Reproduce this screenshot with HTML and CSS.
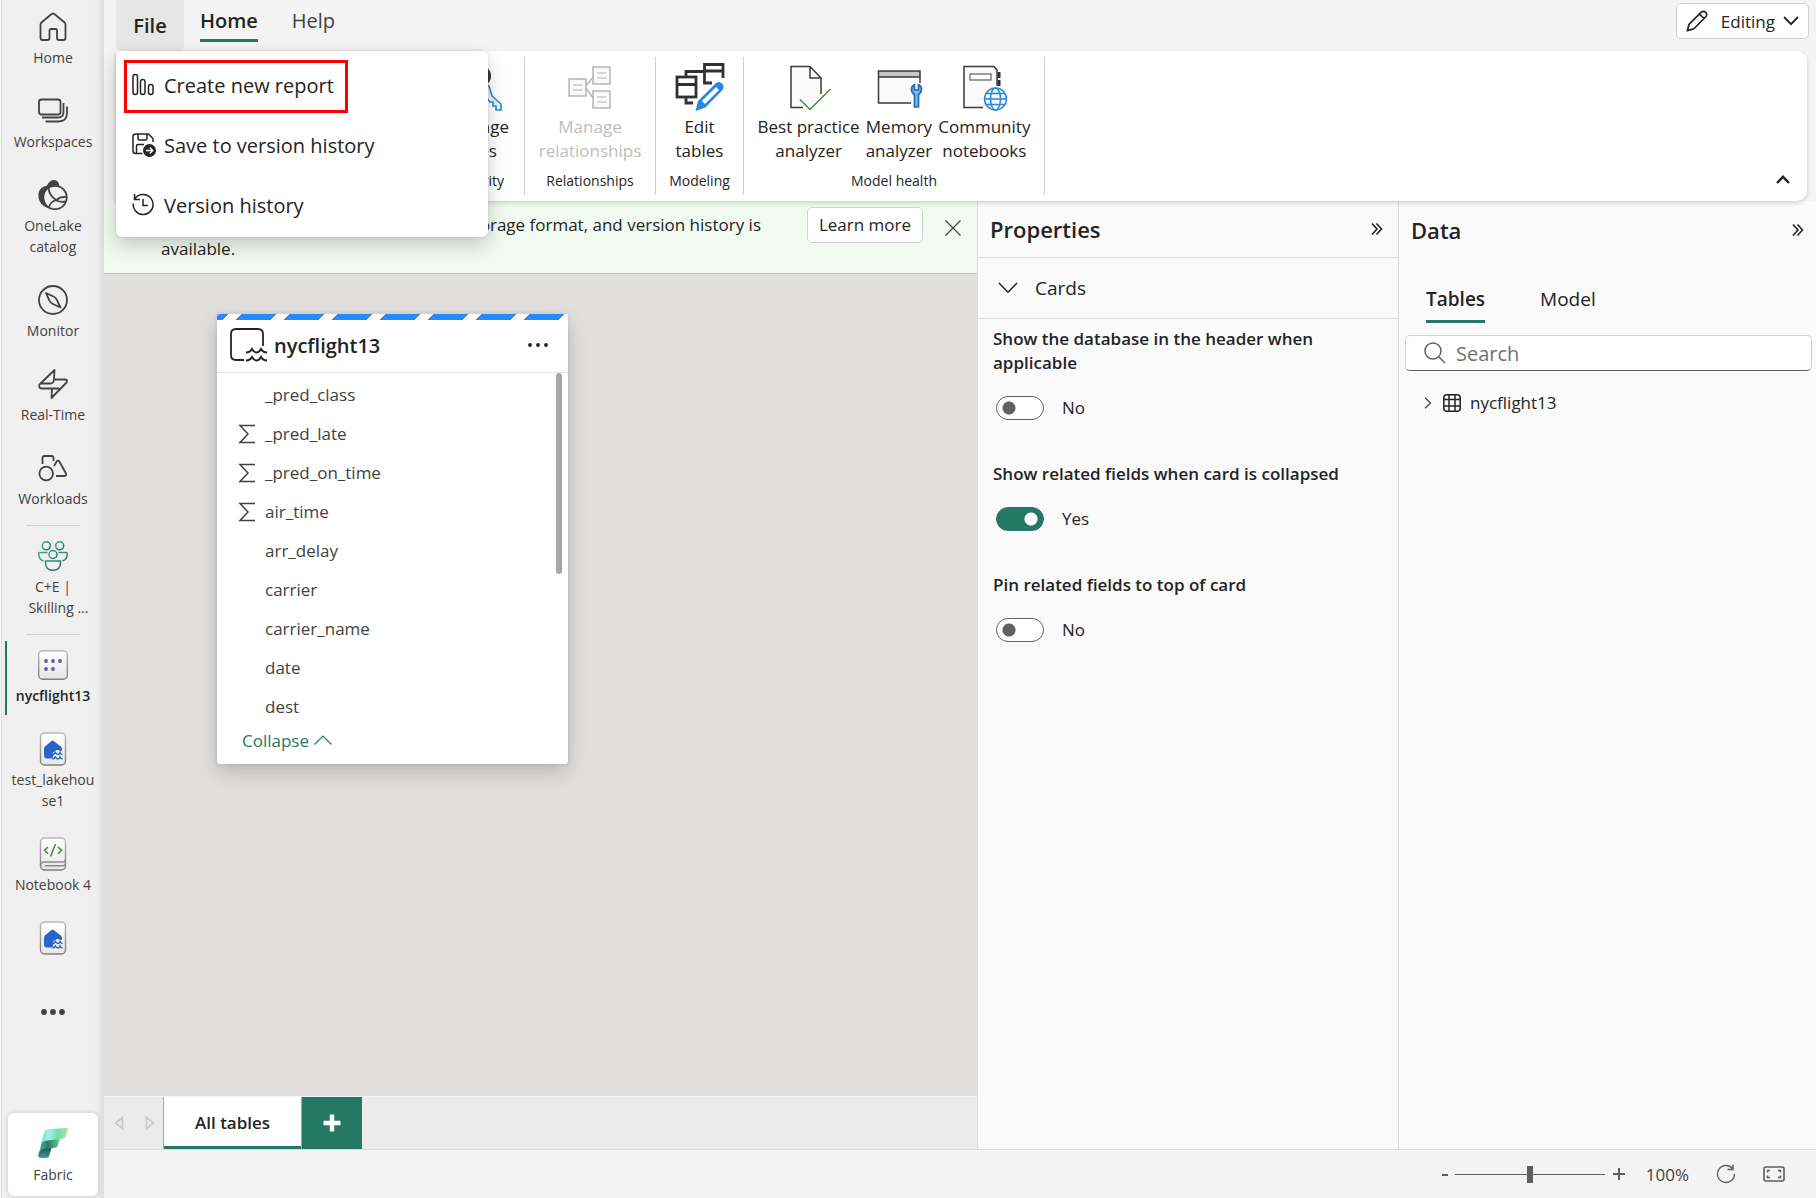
FILE: index.html
```html
<!DOCTYPE html>
<html lang="en">

<head>
  <meta charset="UTF-8">
  <meta name="viewport" content="width=device-width, initial-scale=1.0">
  <title>nycflight13 - Fabric</title>
  <link rel="stylesheet" href="styles.css">
</head>

<body>

  <!-- Shared icon shapes -->
  <svg class="defs" width="0" height="0" aria-hidden="true">
    <defs>
      <linearGradient id="paper" x1="0" y1="0" x2="0" y2="1">
        <stop offset="0" stop-color="#ffffff" />
        <stop offset="1" stop-color="#e6e6e6" />
      </linearGradient>
      <linearGradient id="paperEdge" x1="0" y1="0" x2="0" y2="1">
        <stop offset="0" stop-color="#b8b8b8" />
        <stop offset="1" stop-color="#7f7f7f" />
      </linearGradient>
      <linearGradient id="people" x1="0" y1="0" x2="1" y2="1">
        <stop offset="0" stop-color="#3fa58c" />
        <stop offset="1" stop-color="#21705f" />
      </linearGradient>
      <linearGradient id="fabricTop" x1="0" y1="0" x2="1" y2="0">
        <stop offset="0" stop-color="#6fe0d2" />
        <stop offset="0.3" stop-color="#a5f0e2" />
        <stop offset="0.6" stop-color="#6fdcb4" />
        <stop offset="1" stop-color="#a4e58c" />
      </linearGradient>
      <linearGradient id="fabricMid" x1="0" y1="0" x2="1" y2="0">
        <stop offset="0" stop-color="#4fae98" />
        <stop offset="0.4" stop-color="#2b7a6b" />
        <stop offset="1" stop-color="#6fca92" />
      </linearGradient>
      <linearGradient id="fabricLow" x1="0" y1="0" x2="0" y2="1">
        <stop offset="0" stop-color="#134b45" />
        <stop offset="1" stop-color="#3fa08f" />
      </linearGradient>
      <symbol id="lakehouse" viewBox="0 0 30 34">
        <rect x="2.5" y="1" width="25" height="32" rx="4" fill="url(#paper)" stroke="url(#paperEdge)" stroke-width="1.4" />
        <path d="M15 8.500L22.800 14.500Q24 15.500 24 17V18.500Q22.500 19.600 21 18.200Q18.500 17.600 17 19.200L14.500 21L15.500 23L14.500 26.500H9Q6 26.500 6 23.500V16.500Q6 15.200 7 14.400L13.500 9Q15 7.800 16.500 9Z" fill="#2a63cc" />
        <path d="M14.500 22.500Q16.200 22.500 17.500 20.500Q18.700 22.500 20 22.500Q21.300 22.500 22 20.500Q22.800 22.500 24.500 22.500M14.500 27Q16.200 27 17.500 25Q18.700 27 20 27Q21.300 27 22 25Q22.800 27 24.500 27" fill="none" stroke="#2a5db8" stroke-width="1.4" />
      </symbol>
      <symbol id="sigma" viewBox="0 0 18 20">
        <path d="M17 1.500H2L10 10L2 18.500H17" fill="none" stroke="#424242" stroke-width="1.500" />
      </symbol>
      <symbol id="expand" viewBox="0 0 12 14">
        <path d="M1 1.500L6 7L1 12.500M5.500 1.500L10.500 7L5.500 12.500" fill="none" stroke="#242424" stroke-width="1.600" />
      </symbol>
    </defs>
  </svg>

  <div class="app">

    <nav class="sidebar">
      <a class="nav-item" href="#">
        <svg width="30" height="30" viewBox="0 0 30 30" class="line-icon">
          <path d="M13.300 2.300Q15 .9 16.700 2.300L26.300 10.200Q27.500 11.200 27.500 12.800V26Q27.500 28 25.500 28H21Q19 28 19 26V18.500Q19 17 17.500 17H13Q11.500 17 11.500 18.500V26Q11.500 28 9.500 28H4.500Q2.500 28 2.500 26V12.800Q2.500 11.200 3.700 10.200Z" />
        </svg>
        <span>Home</span>
      </a>
      <a class="nav-item" href="#">
        <svg width="30" height="30" viewBox="0 0 30 30" class="line-icon">
          <rect x="1" y="3.500" width="21.500" height="15" rx="2.500" />
          <path d="M4 21.500H20Q25.500 21.500 25.500 16V7M7.500 25.500H20.500Q29 25.500 29 17V10.500" />
        </svg>
        <span>Workspaces</span>
      </a>
      <a class="nav-item" href="#">
        <svg width="30" height="30" viewBox="0 0 30 30">
          <path d="M9 5.500Q11.500 0 16 0Q20.500 0 21.500 6Q15 4.500 9.500 8Q5.500 12 6 18Q7 25 11 28.500Q4.500 26.500 1.800 21.500Q-.5 17 1 11.500Q2.500 7 9 5.500Z" fill="#424242" />
          <g fill="none" stroke="#424242" stroke-width="1.800">
            <circle cx="17" cy="17.500" r="11.700" />
            <path d="M10.500 8Q11 15.500 18.500 20.500Q22.500 22.500 27.500 21.500M11 27Q12.500 21.500 18.500 20Q22.500 16.500 28 17" />
          </g>
        </svg>
        <span>OneLake<br>catalog</span>
      </a>
      <a class="nav-item" href="#">
        <svg width="30" height="30" viewBox="0 0 30 30" class="line-icon">
          <circle cx="15" cy="15" r="14" />
          <path d="M8 8L15.500 11.500Q18 12.700 19 15.200L22.500 22.500L15 19Q12.500 17.800 11.300 15.300Z" />
        </svg>
        <span>Monitor</span>
      </a>
      <a class="nav-item" href="#">
        <svg width="30" height="30" viewBox="0 0 30 30" class="line-icon">
          <path d="M16.500 1L1.500 15.500Q.5 19 3.500 19.500H14L13.500 29L28.500 13.500Q30 10.500 27 10.500H16ZM16 10.500Q15.500 14.500 12.500 14.500H3M14 19.500H19.500Q21 19.500 22 20" />
        </svg>
        <span>Real-Time</span>
      </a>
      <a class="nav-item" href="#">
        <svg width="30" height="30" viewBox="0 0 30 30" class="line-icon">
          <circle cx="8.200" cy="20.500" r="6.800" />
          <path d="M4.500 11V5Q4.500 3 6.500 3H13.500Q15.500 3 15.500 5V8M16 13L18.500 8.700Q20 6.500 21.500 8.700L28 20.500Q28.800 23 26.500 23H18" />
        </svg>
        <span>Workloads</span>
      </a>
      <div class="nav-divider"></div>
      <a class="nav-item" href="#">
        <svg width="30" height="30" viewBox="0 0 30 30" fill="none" stroke="url(#people)" stroke-width="1.500">
          <circle cx="8.300" cy="4.800" r="4" />
          <circle cx="21.700" cy="4.800" r="4" />
          <circle cx="15" cy="13.500" r="4" />
          <path d="M7.500 20H22.500V22Q22.500 29.200 15 29.200Q7.500 29.200 7.500 22ZM9.500 11.500H1.500Q.8 11.500 .8 13Q.8 18.500 5.500 20M20.500 11.500H28.500Q29.200 11.500 29.200 13Q29.200 18.500 24.500 20" />
        </svg>
        <span>C+E |<br>&nbsp; &nbsp;Skilling ...</span>
      </a>
      <div class="nav-divider"></div>
      <a class="nav-item active" href="#">
        <svg width="30" height="30" viewBox="0 0 30 30">
          <rect x=".7" y=".7" width="28.600" height="28.600" rx="4" fill="url(#paper)" stroke="url(#paperEdge)" stroke-width="1.400" />
          <g fill="#6b4fb8">
            <circle cx="8" cy="11" r="1.900" />
            <circle cx="15" cy="11" r="1.900" />
            <circle cx="22" cy="11" r="1.900" />
            <circle cx="8" cy="19" r="1.900" />
            <circle cx="15" cy="19" r="1.900" />
          </g>
        </svg>
        <span>nycflight13</span>
      </a>
      <a class="nav-item" href="#">
        <svg class="tall" width="30" height="34"><use href="#lakehouse" /></svg>
        <span>test_lakehou<br>se1</span>
      </a>
      <a class="nav-item" href="#">
        <svg class="tall" width="30" height="34" viewBox="0 0 30 34">
          <rect x="2.500" y="1" width="25" height="32" rx="4" fill="url(#paper)" stroke="url(#paperEdge)" stroke-width="1.400" />
          <path d="M2.500 29Q2.500 25 6.500 25H24Q27.500 25 27.500 22M7 28.700H25.500Q27.500 28.500 27.500 26" fill="none" stroke="#8a8a8a" stroke-width="1.400" />
          <path d="M10 10L6.500 13.300L10 16.600M20 10L23.500 13.300L20 16.600M17.500 7L12.500 19.500" fill="none" stroke="#45963c" stroke-width="1.600" />
        </svg>
        <span>Notebook 4</span>
      </a>
      <a class="nav-item icon-only" href="#" aria-label="Lakehouse">
        <svg class="tall" width="30" height="34"><use href="#lakehouse" /></svg>
      </a>
      <button class="nav-more" aria-label="More">
        <svg width="24" height="6" viewBox="0 0 24 6" fill="#424242">
          <circle cx="3" cy="3" r="2.900" />
          <circle cx="12" cy="3" r="2.900" />
          <circle cx="21" cy="3" r="2.900" />
        </svg>
      </button>
      <a class="fabric" href="#">
        <svg width="30" height="30" viewBox="0 0 30 30">
          <path d="M1 24L3.500 20.500L14 18L11.500 27Q11 30 8 30H3Q0 30 .3 27Z" fill="url(#fabricLow)" />
          <path d="M4 13L22 10L20 17.500Q19.500 19.500 17 19.700L6 21Q2.500 21.500 1.300 24Z" fill="url(#fabricMid)" />
          <path d="M6 4.500Q7 1.500 10 1.200L30 0L27.500 8.500Q27 10.500 24.500 10.800L9 12.500Q4.500 13 3 16Z" fill="url(#fabricTop)" />
        </svg>
        <span>Fabric</span>
      </a>
    </nav>

    <div class="main">

      <header class="topbar">
        <button class="file-tab">File</button>
        <button class="top-tab selected">Home</button>
        <button class="top-tab">Help</button>
        <button class="mode">
          <svg width="22" height="22" viewBox="0 0 22 22" fill="none" stroke="#242424" stroke-width="1.700">
            <path d="M1.500 20.500L2.800 15Q3 14.300 3.500 13.800L15.500 2Q17.500 .5 19.700 2.300Q21.500 4.500 20 6.500L8.200 18.500Q7.700 19 7 19.200ZM13.500 4L18 8.500" />
          </svg>
          <span>Editing</span>
          <svg width="16" height="10" viewBox="0 0 16 10" fill="none" stroke="#242424" stroke-width="1.800">
            <path d="M1 1L8 8.200L15 1" />
          </svg>
        </button>

        <div class="file-menu" role="menu">
          <button class="menu-item highlighted" role="menuitem">
            <svg width="24" height="24" viewBox="0 0 24 24" fill="none" stroke="#242424" stroke-width="1.500">
              <rect x="1" y="1.500" width="4.500" height="20" rx="2.200" />
              <rect x="8.500" y="6.500" width="4.500" height="15" rx="2.200" />
              <rect x="16.500" y="11.500" width="4.500" height="10" rx="2.200" />
            </svg>
            <span>Create new report</span>
          </button>
          <button class="menu-item" role="menuitem">
            <svg width="24" height="24" viewBox="0 0 24 24" fill="none" stroke="#242424" stroke-width="1.500">
              <path d="M10.500 20.500H3.500Q1 20.500 1 18V3.500Q1 1 3.500 1H15.500Q16.500 1 17.500 2L20 4.500Q21 5.500 21 6.500V9M6 1V5.500Q6 7 7.500 7H13.500Q15 7 15 5.500V1M4.500 20V13Q4.500 11.500 6 11.500H12" />
              <circle cx="17.500" cy="17.500" r="6.500" fill="#242424" stroke="none" />
              <path d="M14 17.500H20.500M17.800 14.500L20.800 17.500L17.800 20.500" stroke="#fff" stroke-width="1.400" />
            </svg>
            <span>Save to version history</span>
          </button>
          <button class="menu-item" role="menuitem">
            <svg width="24" height="24" viewBox="0 0 24 24" fill="none" stroke="#242424" stroke-width="1.500">
              <path d="M2.500 1V6.500H8M2.800 6Q5.500 1.500 11 1.500A10 10 0 1 1 1.200 10.500M11 6V12.500H16" />
            </svg>
            <span>Version history</span>
          </button>
        </div>
      </header>

      <section class="ribbon">
        <div class="group security">
          <div class="group-buttons">
            <button class="tool">
              <svg width="54" height="50" viewBox="0 0 54 50" fill="none">
                <circle cx="30" cy="14" r="11" fill="#3b3a39" />
                <path d="M29 22L39 24L42 34L51 42V48H46V44H43V40H40L36 35Z" fill="#eaf4fc" stroke="#2b88d8" stroke-width="1.600" />
              </svg>
              <span>Manage<br>roles</span>
            </button>
          </div>
          <div class="group-label">Security</div>
        </div>
        <div class="group relationships">
          <div class="group-buttons">
            <button class="tool" disabled>
              <svg width="54" height="50" viewBox="0 0 54 50" fill="#fafafa" stroke="#b3b0ad" stroke-width="1.400">
                <path d="M22 25L31 14M22 25L31 37" />
                <rect x="6" y="17" width="17" height="17" />
                <rect x="30" y="5" width="17" height="17" />
                <rect x="30" y="29" width="17" height="17" />
                <path d="M10 23H19.500M10 28H19.500M34 11H43.500M34 16H43.500M34 35H43.500M34 40H43.500" stroke-width="1" />
              </svg>
              <span>Manage<br>relationships</span>
            </button>
          </div>
          <div class="group-label">Relationships</div>
        </div>
        <div class="group modeling">
          <div class="group-buttons">
            <button class="tool">
              <svg width="54" height="50" viewBox="0 0 54 50" fill="none">
                <g stroke="#323130" stroke-width="2.800">
                  <path d="M50 16V2.500H31.500V21H39M31 9.500H13V15M31.500 9H50" />
                  <rect x="4" y="15" width="19" height="20" />
                  <path d="M4 22.500H23M13 35V41H20" />
                </g>
                <path d="M22.500 49L25 39L42.500 21.500Q45.500 18.500 49 21.500Q52 24.500 49.500 28L32.500 45.500Z" fill="#2b88d8" />
                <path d="M29 39L43 25L46 28L32 42Z" fill="#fff" />
              </svg>
              <span>Edit<br>tables</span>
            </button>
          </div>
          <div class="group-label">Modeling</div>
        </div>
        <div class="group health">
          <div class="group-buttons">
            <button class="tool">
              <svg width="54" height="50" viewBox="0 0 54 50" fill="none">
                <path d="M17 45.500H9V4.500H28L39 16V32L27 45Z" fill="#fafafa" />
                <path d="M21 45.500H9V4.500H28L39 16V32M28 4.500V16H39" stroke="#3b3a39" stroke-width="1.500" />
                <path d="M18 37.500L28 47.500L48.500 27" stroke="#2f8f3f" stroke-width="1.500" />
              </svg>
              <span>Best practice<br>analyzer</span>
            </button>
            <button class="tool">
              <svg width="54" height="50" viewBox="0 0 54 50" fill="none">
                <path d="M39 41H6.500V9H48V22Z" fill="#fafafa" />
                <rect x="6.500" y="9" width="41.500" height="6" fill="#c8c6c4" />
                <path d="M39 41H6.500V9H48V21M6.500 15H48" stroke="#3b3a39" stroke-width="1.500" />
                <path d="M42.500 45V32.500Q39.500 30.500 39.500 27.500Q39.500 24 42.500 22.800V28H46.500V22.800Q49.500 24 49.500 27.500Q49.500 30.500 46.500 32.500V45Z" fill="#83b9eb" stroke="#1e6bb8" stroke-width="1.700" />
              </svg>
              <span>Memory<br>analyzer</span>
            </button>
            <button class="tool">
              <svg width="54" height="50" viewBox="0 0 54 50" fill="none">
                <path d="M26 45.500H7V4.500H37L40 8V24" fill="#fafafa" />
                <path d="M26 45.500H7V4.500H37L40 8V24" stroke="#3b3a39" stroke-width="1.500" />
                <rect x="13" y="12" width="21" height="6" stroke="#797775" stroke-width="1.400" />
                <path d="M42 10V16M42 18V24" stroke="#323130" stroke-width="3" />
                <circle cx="38.500" cy="37" r="12.500" fill="#fff" />
                <g stroke="#2b88d8" stroke-width="1.500">
                  <circle cx="38.500" cy="37" r="11" fill="#f3f9fd" />
                  <ellipse cx="38.500" cy="37" rx="5" ry="11" />
                  <path d="M27.500 37H49.500M29 31.500H48M29 42.500H48" />
                </g>
              </svg>
              <span>Community<br>notebooks</span>
            </button>
          </div>
          <div class="group-label">Model health</div>
        </div>
        <button class="collapse-ribbon" aria-label="Collapse ribbon">
          <svg width="14" height="9" viewBox="0 0 14 9" fill="none" stroke="#242424" stroke-width="2.400">
            <path d="M1 8L7 1.800L13 8" />
          </svg>
        </button>
      </section>

      <div class="workspace">

        <div class="center">
          <div class="notice">
            <p><span class="notice-line">in large storage format, and version history is</span> available.</p>
            <button class="learn-more">Learn more</button>
            <button class="notice-close" aria-label="Close">
              <svg width="16" height="16" viewBox="0 0 16 16" fill="none" stroke="#424242" stroke-width="1.200">
                <path d="M.5 .5L15.500 15.500M15.500 .5L.5 15.500" />
              </svg>
            </button>
          </div>

          <div class="canvas">
            <article class="table-card">
              <div class="stripe"></div>
              <div class="card-header">
                <svg width="38" height="34" viewBox="0 0 38 34" fill="none" stroke="#242424" stroke-width="1.800">
                  <path d="M33 18V6Q33 1 28 1H6Q1 1 1 6V27Q1 32 6 32H14" />
                  <path d="M16 24.500Q20 24.500 22 21Q24 24.500 26.500 24.500Q29 24.500 31 21Q33 24.500 37 24.500M16 32.500Q20 32.500 22 29Q24 32.500 26.500 32.500Q29 32.500 31 29Q33 32.500 37 32.500" stroke-width="2" />
                </svg>
                <h2>nycflight13</h2>
                <button class="card-more" aria-label="More options">
                  <svg width="20" height="4" viewBox="0 0 20 4" fill="#242424">
                    <circle cx="2" cy="2" r="1.900" />
                    <circle cx="10" cy="2" r="1.900" />
                    <circle cx="18" cy="2" r="1.900" />
                  </svg>
                </button>
              </div>
              <div class="card-body">
                <ul class="fields">
                  <li><i></i>_pred_class</li>
                  <li><i><svg width="18" height="20"><use href="#sigma" /></svg></i>_pred_late</li>
                  <li><i><svg width="18" height="20"><use href="#sigma" /></svg></i>_pred_on_time</li>
                  <li><i><svg width="18" height="20"><use href="#sigma" /></svg></i>air_time</li>
                  <li><i></i>arr_delay</li>
                  <li><i></i>carrier</li>
                  <li><i></i>carrier_name</li>
                  <li><i></i>date</li>
                  <li><i></i>dest</li>
                </ul>
                <div class="scroll-thumb"></div>
              </div>
              <button class="card-collapse">
                <span>Collapse</span>
                <svg width="18" height="10" viewBox="0 0 18 10" fill="none" stroke="#257864" stroke-width="1.200">
                  <path d="M.5 9.500L9 1L17.500 9.500" />
                </svg>
              </button>
            </article>
          </div>

          <div class="page-tabs">
            <button class="page-arrow" aria-label="Previous page">
              <svg width="10" height="14" viewBox="0 0 10 14" fill="none" stroke="#c8c8c8" stroke-width="1.600">
                <path d="M8.500 1.500V12.500L1.500 7Z" />
              </svg>
            </button>
            <button class="page-arrow" aria-label="Next page">
              <svg width="10" height="14" viewBox="0 0 10 14" fill="none" stroke="#c8c8c8" stroke-width="1.600">
                <path d="M1.500 1.500V12.500L8.500 7Z" />
              </svg>
            </button>
            <button class="page-tab">All tables</button>
            <button class="page-add" aria-label="New page">
              <svg width="18" height="18" viewBox="0 0 18 18" stroke="#fff" stroke-width="4.500">
                <path d="M9 .5V17.500M.5 9H17.500" />
              </svg>
            </button>
          </div>
        </div>

        <aside class="pane properties">
          <div class="pane-header">
            <h1>Properties</h1>
            <button class="icon-button" aria-label="Collapse Properties"><svg width="12" height="14"><use href="#expand" /></svg></button>
          </div>
          <button class="section-toggle">
            <svg width="20" height="12" viewBox="0 0 20 12" fill="none" stroke="#242424" stroke-width="1.500">
              <path d="M1 1L10 10.200L19 1" />
            </svg>
            <span>Cards</span>
          </button>
          <div class="settings">
            <div class="setting">
              <label for="showDatabase">Show the database in the header when applicable</label>
              <div class="switch-row"><input type="checkbox" class="switch" id="showDatabase"><span>No</span></div>
            </div>
            <div class="setting">
              <label for="showRelated">Show related fields when card is collapsed</label>
              <div class="switch-row"><input type="checkbox" class="switch" id="showRelated" checked><span>Yes</span></div>
            </div>
            <div class="setting">
              <label for="pinRelated">Pin related fields to top of card</label>
              <div class="switch-row"><input type="checkbox" class="switch" id="pinRelated"><span>No</span></div>
            </div>
          </div>
        </aside>

        <aside class="pane data">
          <div class="pane-header">
            <h1>Data</h1>
            <button class="icon-button" aria-label="Collapse Data"><svg width="12" height="14"><use href="#expand" /></svg></button>
          </div>
          <div class="data-tabs">
            <button class="data-tab selected">Tables</button>
            <button class="data-tab">Model</button>
          </div>
          <div class="search">
            <svg width="22" height="22" viewBox="0 0 22 22" fill="none" stroke="#616161" stroke-width="1.500">
              <circle cx="9" cy="9" r="8" />
              <path d="M14.800 14.800L21 21" />
            </svg>
            <input type="text" id="search" placeholder="Search" aria-label="Search">
          </div>
          <button class="tree-row">
            <svg width="8" height="12" viewBox="0 0 8 12" fill="none" stroke="#424242" stroke-width="1.300">
              <path d="M1 .8L6.500 6L1 11.200" />
            </svg>
            <svg width="18" height="18" viewBox="0 0 18 18" fill="none" stroke="#242424" stroke-width="1.500">
              <rect x=".8" y=".8" width="16.400" height="16.400" rx="3" />
              <path d="M6 1V17M12 1V17M1 5.500H17M1 12H17" />
            </svg>
            <span>nycflight13</span>
          </button>
        </aside>

      </div>

      <footer class="status">
        <button class="zoom-step" aria-label="Zoom out">
          <svg width="8" height="12" viewBox="0 0 8 12" stroke="#605e5c" stroke-width="2"><path d="M1 7H7" /></svg>
        </button>
        <input type="range" class="zoom" min="0" max="200" value="100" aria-label="Zoom">
        <button class="zoom-step" aria-label="Zoom in">
          <svg width="12" height="12" viewBox="0 0 12 12" stroke="#605e5c" stroke-width="2"><path d="M0 6H12M6 0V12" /></svg>
        </button>
        <span class="zoom-value">100%</span>
        <button class="zoom-step" aria-label="Reset">
          <svg width="20" height="20" viewBox="0 0 20 20" fill="none" stroke="#605e5c" stroke-width="1.400">
            <path d="M16.500 4.500A8.500 8.500 0 1 0 18.500 10M17 .5V5.500H11.500" />
          </svg>
        </button>
        <button class="zoom-step fit" aria-label="Fit to page">
          <svg width="22" height="16" viewBox="0 0 22 16" fill="none" stroke="#605e5c" stroke-width="1.600">
            <rect x="1" y="1" width="20" height="14" rx="2" />
            <path d="M7 4.500H4.500V6.500M4.500 9.500V11.500H7M15 4.500H17.500V6.500M17.500 9.500V11.500H15" stroke-width="1.500" />
          </svg>
        </button>
      </footer>

    </div>
  </div>

</body>

</html>
```
FILE: styles.css
```css
* {
  margin: 0;
  padding: 0;
  box-sizing: border-box;
}

body {
  font-family: 'Segoe UI', 'Open Sans', sans-serif;
  font-size: 17px;
  color: #242424;
  background-color: #f4f4f4;
}

button,
input {
  font: inherit;
  color: inherit;
  background: none;
  border: none;
}

button {
  cursor: pointer;
}

a {
  color: inherit;
  text-decoration: none;
}

svg {
  display: block;
  flex: none;
}

.defs {
  position: absolute;
}

.app {
  display: flex;
  height: 100vh;
}

/* Left navigation */
.sidebar {
  flex: none;
  width: 103px;
  margin-left: 1px;
  display: flex;
  flex-direction: column;
  background-color: #f0f0f0;
  border-left: 1px solid #e0e0e0;
  box-shadow: inset -10px 0 8px -8px rgba(0, 0, 0, 0.12);
}

.nav-item {
  display: flex;
  flex-direction: column;
  align-items: center;
  gap: 5px;
  padding: 12px 0 16px;
  font-size: 14px;
  line-height: 21px;
  text-align: center;
  color: #424242;
  white-space: nowrap;
}

.line-icon {
  fill: none;
  stroke: #424242;
  stroke-width: 1.8;
  stroke-linejoin: round;
}

.nav-item .tall {
  margin: -2px 0;
}

.nav-item.active {
  font-weight: 600;
  color: #242424;
  background: linear-gradient(#257864, #257864) 3px 3px / 2px 74px no-repeat;
}

.nav-item.icon-only {
  padding-bottom: 40px;
}

.nav-divider {
  width: 54px;
  height: 4px;
  margin: 0 auto;
  border-top: 1px solid #d1d1d1;
}

.nav-more {
  align-self: center;
  padding: 16px 8px;
}

.fabric {
  display: flex;
  flex-direction: column;
  align-items: center;
  gap: 6px;
  margin: auto 6px 2px;
  padding: 15px 0 11px;
  font-size: 14px;
  line-height: 21px;
  color: #424242;
  background-color: #fff;
  border-radius: 6px;
  box-shadow: 0 0 5px rgba(0, 0, 0, 0.18);
}

.main {
  flex: 1;
  min-width: 0;
  display: flex;
  flex-direction: column;
}

/* Top tabs and the File menu */
.topbar {
  position: relative;
  z-index: 2;
  display: flex;
  align-items: flex-start;
  height: 51px;
  padding: 0 7px 0 12px;
}

.file-tab {
  width: 68px;
  height: 51px;
  font-size: 20px;
  font-weight: 600;
  background-color: #e6e6e6;
  border-radius: 0 0 6px 6px;
}

.top-tab {
  height: 42px;
  margin-left: 16px;
  padding-top: 3px;
  font-size: 20px;
  line-height: 36px;
  color: #424242;
  border-bottom: 3px solid transparent;
}

.top-tab + .top-tab {
  margin-left: 34px;
}

.top-tab.selected {
  font-weight: 600;
  color: #242424;
  border-color: #257864;
}

.mode {
  display: flex;
  align-items: center;
  gap: 8px;
  height: 36px;
  margin: 3px 0 0 auto;
  padding: 0 9px;
  background-color: #fff;
  border: 1px solid #d1d1d1;
  border-radius: 5px;
}

.mode span {
  margin-left: 5px;
}

.file-menu {
  position: absolute;
  top: 51px;
  left: 12px;
  width: 372px;
  padding: 9px 8px 4px;
  background-color: #fff;
  border-radius: 6px;
  box-shadow: 0 8px 20px rgba(0, 0, 0, 0.2), 0 0 3px rgba(0, 0, 0, 0.12);
}

.menu-item {
  display: flex;
  align-items: center;
  gap: 8px;
  height: 53px;
  margin-bottom: 7px;
  padding: 0 11px 3px 5px;
  font-size: 20px;
  border: 3px solid transparent;
}

.menu-item:last-child {
  margin-bottom: 0;
}

.menu-item.highlighted {
  border-color: #f00;
}

/* Ribbon */
.ribbon {
  position: relative;
  z-index: 1;
  display: flex;
  height: 150px;
  margin: 0 9px 0 12px;
  padding: 6px 0;
  background-color: #fff;
  border-radius: 0 10px 10px 0;
  box-shadow: 0 2px 4px rgba(0, 0, 0, 0.16);
}

.group {
  display: flex;
  flex-direction: column;
  justify-content: space-between;
  align-items: center;
  border-right: 1px solid #d1d1d1;
}

.group-buttons {
  display: flex;
}

.group-label {
  font-size: 14px;
  line-height: 28px;
}

.group.security {
  width: 409px;
  align-items: flex-end;
  padding-right: 12px;
}

.group.security .group-label {
  padding-right: 8px;
}

.group.relationships {
  width: 131px;
}

.group.modeling {
  width: 88px;
}

.group.health {
  width: 301px;
}

.tool {
  display: flex;
  flex-direction: column;
  align-items: center;
  gap: 3px;
  padding: 5px 3px 0;
  line-height: 24px;
  white-space: nowrap;
}

.tool:disabled {
  color: #bdbdbd;
}

.collapse-ribbon {
  margin: auto 17px 11px auto;
}

/* Work area */
.workspace {
  flex: 1;
  min-height: 0;
  display: flex;
}

.center {
  flex: 1;
  min-width: 0;
  display: flex;
  flex-direction: column;
}

.notice {
  display: flex;
  align-items: flex-start;
  height: 73px;
  padding: 6px 16px 0 57px;
  line-height: 24px;
  background-color: #f1faf1;
  border-bottom: 1px solid #9fd89f;
}

.notice p {
  width: 600px;
  margin-top: 6px;
}

.notice-line {
  display: block;
  text-align: right;
  white-space: nowrap;
}

.learn-more {
  height: 36px;
  margin-left: auto;
  padding: 0 11px;
  background-color: #fff;
  border: 1px solid #d1d1d1;
  border-radius: 5px;
}

.notice-close {
  margin: 13px 0 0 22px;
}

.canvas {
  flex: 1;
  min-height: 0;
  padding: 40px 113px;
  background-color: #e0dfdd;
}

.table-card {
  width: 351px;
  height: 450px;
  display: flex;
  flex-direction: column;
  background-color: #fff;
  border-radius: 3px;
  overflow: hidden;
  box-shadow: 0 8px 20px rgba(0, 0, 0, 0.18), 0 0 4px rgba(0, 0, 0, 0.1);
}

.stripe {
  height: 6px;
  background: repeating-linear-gradient(135deg, #2589ff 0, #2589ff 8px, #fff 8px, #fff 17px, #2589ff 17px, #2589ff 34px);
}

.card-header {
  display: flex;
  align-items: center;
  gap: 6px;
  height: 53px;
  padding: 0 20px 2px 13px;
  border-bottom: 1px solid #e6e6e6;
}

.card-header h2 {
  font-size: 20px;
  font-weight: 600;
}

.card-more {
  margin-left: auto;
}

.card-body {
  display: flex;
  justify-content: space-between;
  padding-right: 6px;
}

.fields {
  list-style: none;
  padding: 2px 0 0 21px;
}

.fields li {
  display: flex;
  align-items: center;
  height: 39px;
  color: #424242;
}

.fields i {
  width: 27px;
}

.scroll-thumb {
  width: 6px;
  height: 201px;
  background-color: #a6a6a6;
  border-radius: 3px;
}

.card-collapse {
  display: flex;
  align-items: center;
  gap: 5px;
  height: 28px;
  padding-left: 25px;
  color: #257864;
}

.page-tabs {
  display: flex;
  height: 53px;
  padding-left: 8px;
  background-color: #ebebeb;
  border-top: 1px solid #f4f4f4;
}

.page-arrow {
  padding: 0 8px 0 2px;
}

.page-arrow + .page-arrow {
  padding: 0 7px 0 13px;
}

.page-tab {
  margin-left: 1px;
  padding: 0 31px 1px;
  font-weight: 600;
  background-color: #fff;
  border-left: 1px solid #a6a6a6;
  border-right: 1px solid #a6a6a6;
  box-shadow: inset 0 -3px #257864;
}

.page-add {
  padding: 0 21px;
  background-color: #257864;
}

/* Side panes */
.pane {
  display: flex;
  flex-direction: column;
  background-color: #fafafa;
  border-left: 1px solid #dcdcdc;
}

.properties {
  width: 421px;
}

.data {
  width: 418px;
}

.pane-header {
  display: flex;
  justify-content: space-between;
  align-items: center;
  height: 57px;
  padding: 0 12px;
}

.properties .pane-header {
  padding-right: 15px;
  border-bottom: 1px solid #dcdcdc;
}

.pane-header h1 {
  font-size: 22px;
  font-weight: 600;
}

.section-toggle {
  display: flex;
  align-items: center;
  gap: 17px;
  height: 61px;
  padding-left: 20px;
  font-size: 19px;
  border-bottom: 1px solid #dcdcdc;
}

.settings {
  display: flex;
  flex-direction: column;
  gap: 42px;
  padding: 8px 15px;
}

.setting {
  display: flex;
  flex-direction: column;
  gap: 21px;
  line-height: 24px;
}

.setting label {
  font-weight: 600;
}

.switch-row {
  display: flex;
  align-items: center;
  gap: 18px;
  height: 24px;
  padding-left: 3px;
}

.switch {
  appearance: none;
  width: 48px;
  height: 24px;
  border: 1px solid #616161;
  border-radius: 12px;
  background: radial-gradient(circle at 12px 11px, #616161 6px, #fff 7px);
}

.switch:checked {
  border-color: #257864;
  background: radial-gradient(circle at 34px 11px, #fff 6px, #257864 7px);
}

.data-tabs {
  display: flex;
  gap: 55px;
  height: 65px;
  padding: 19px 27px 0;
}

.data-tab {
  height: 46px;
  font-size: 19px;
  border-bottom: 3px solid transparent;
}

.data-tab.selected {
  font-weight: 600;
  border-color: #257864;
}

.search {
  display: flex;
  align-items: center;
  gap: 10px;
  height: 36px;
  margin: 12px 4px 0 6px;
  padding: 0 18px;
  background-color: #fff;
  border: 1px solid #d1d1d1;
  border-bottom-color: #616161;
  border-radius: 5px;
}

.search input {
  flex: 1;
  min-width: 0;
  font-size: 20px;
}

.search input::placeholder {
  color: #707070;
}

.tree-row {
  display: flex;
  align-items: center;
  gap: 9px;
  margin-top: 18px;
  padding-left: 25px;
  line-height: 28px;
}

.tree-row svg:first-child {
  margin-right: 2px;
}

/* Status bar */
.status {
  display: flex;
  justify-content: flex-end;
  align-items: center;
  height: 49px;
  padding-right: 31px;
  color: #424242;
  border-top: 1px solid #dcdcdc;
}

.zoom {
  appearance: none;
  width: 150px;
  height: 18px;
  margin: 0 8px 0 6px;
  background: linear-gradient(#605e5c, #605e5c) center / 100% 1px no-repeat;
}

.zoom::-webkit-slider-thumb {
  appearance: none;
  width: 6px;
  height: 17px;
  background-color: #605e5c;
}

.zoom-value {
  margin: 0 27px 0 21px;
}

.fit {
  margin-left: 27px;
}
```
